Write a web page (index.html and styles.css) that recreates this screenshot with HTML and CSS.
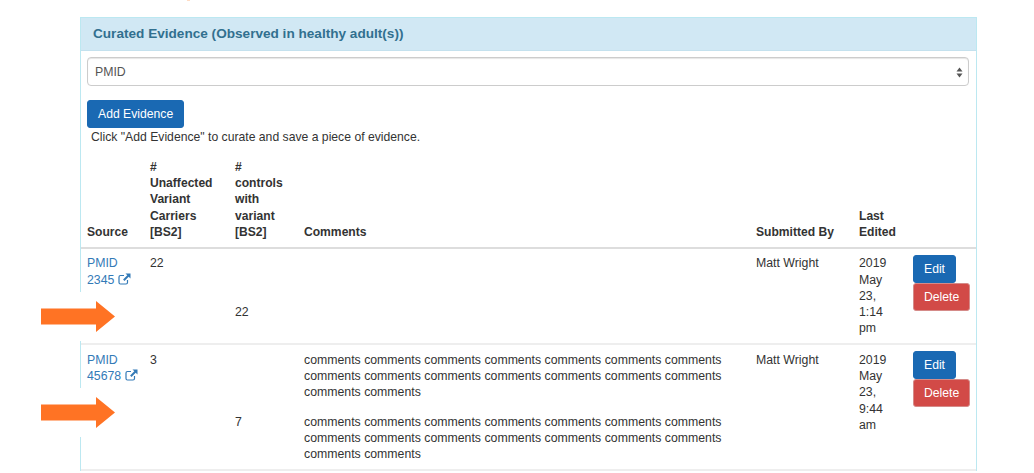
FILE: index.html
```html
<!DOCTYPE html>
<html lang="en">

<head>
    <meta charset="UTF-8">
    <title>Curated Evidence</title>
    <link rel="stylesheet" href="styles.css">
</head>

<body>
    <div class="sliver"></div>
    <div class="panel">
        <div class="panel-heading">Curated Evidence (Observed in healthy adult(s))</div>
        <div class="panel-body">
            <div class="select-box">
                <span>PMID</span>
                <svg class="select-arrows" width="7" height="11" viewBox="0 0 7 11">
                    <path d="M3.5 0.5 L6.5 4.5 H0.5 Z M3.5 10.5 L6.5 6.5 H0.5 Z" fill="#555" />
                </svg>
            </div>
            <button class="btn btn-primary add-btn">Add Evidence</button>
            <p class="help-text">Click "Add Evidence" to curate and save a piece of evidence.</p>
        </div>

        <table class="evidence">
            <colgroup>
                <col class="col-source">
                <col class="col-unaffected">
                <col class="col-controls">
                <col class="col-comments">
                <col class="col-submitted">
                <col class="col-edited">
                <col class="col-actions">
            </colgroup>
            <thead>
                <tr>
                    <th>Source</th>
                    <th>#<br>Unaffected<br>Variant<br>Carriers<br>[BS2]</th>
                    <th>#<br>controls<br>with<br>variant<br>[BS2]</th>
                    <th>Comments</th>
                    <th>Submitted By</th>
                    <th>Last Edited</th>
                    <th></th>
                </tr>
            </thead>
            <tbody>
                <tr class="sub-top">
                    <td><a href="#">PMID 2345
                            <svg class="ext-icon" width="13" height="12" viewBox="0 0 13 12">
                                <path d="M9.5 7v2.5a1.5 1.5 0 0 1-1.5 1.5H2.500a1.500 1.500 0 0 1-1.500-1.500V4A1.500 1.500 0 0 1 2.500 2.500H6" fill="none" stroke="#337ab7" stroke-width="1.200" />
                                <path d="M7.500 0.500H12.500V5.500L10.700 3.700 6.500 7.900 5.100 6.500 9.300 2.300Z" fill="#337ab7" />
                            </svg></a></td>
                    <td>22</td>
                    <td></td>
                    <td></td>
                    <td rowspan="2" class="spanning">Matt Wright</td>
                    <td rowspan="2" class="spanning">2019<br>May<br>23,<br>1:14<br>pm</td>
                    <td rowspan="2" class="spanning actions">
                        <button class="btn btn-primary">Edit</button>
                        <button class="btn btn-danger">Delete</button>
                    </td>
                </tr>
                <tr class="sub-bottom tall">
                    <td></td>
                    <td></td>
                    <td>22</td>
                    <td></td>
                </tr>
                <tr class="sub-top">
                    <td><a href="#">PMID 45678
                            <svg class="ext-icon" width="13" height="12" viewBox="0 0 13 12">
                                <path d="M9.5 7v2.5a1.5 1.5 0 0 1-1.5 1.5H2.500a1.500 1.500 0 0 1-1.500-1.500V4A1.500 1.500 0 0 1 2.500 2.500H6" fill="none" stroke="#337ab7" stroke-width="1.200" />
                                <path d="M7.500 0.500H12.500V5.500L10.700 3.700 6.500 7.900 5.100 6.500 9.300 2.300Z" fill="#337ab7" />
                            </svg></a></td>
                    <td>3</td>
                    <td></td>
                    <td>comments comments comments comments comments comments comments comments comments comments comments comments comments comments comments comments</td>
                    <td rowspan="2" class="spanning">Matt Wright</td>
                    <td rowspan="2" class="spanning">2019<br>May<br>23,<br>9:44<br>am</td>
                    <td rowspan="2" class="spanning actions">
                        <button class="btn btn-primary">Edit</button>
                        <button class="btn btn-danger">Delete</button>
                    </td>
                </tr>
                <tr class="sub-bottom">
                    <td></td>
                    <td></td>
                    <td>7</td>
                    <td>comments comments comments comments comments comments comments comments comments comments comments comments comments comments comments comments</td>
                </tr>
            </tbody>
        </table>
    </div>

    <!-- arrows sit on top of the screenshot, each with its own white backing -->
    <div class="arrow arrow-one">
        <svg width="74" height="31" viewBox="0 0 74 31">
            <path d="M0 7.500H55V0L74 15.500 55 31V23.500H0Z" fill="#ff7324" />
        </svg>
    </div>
    <div class="arrow arrow-two">
        <svg width="74" height="31" viewBox="0 0 74 31">
            <path d="M0 7.500H55V0L74 15.500 55 31V23.500H0Z" fill="#ff7324" />
        </svg>
    </div>
</body>

</html>
```

FILE: styles.css
```css
* {
    box-sizing: border-box;
}

html,
body {
    height: 473px;
    overflow: hidden;
}

body {
    margin: 0;
    padding: 17px 57px 0 80px;
    background-color: #fff;
    font-family: 'Liberation Sans', Arial, sans-serif;
    font-size: 12.3px;
    line-height: 16.3px;
    color: #333;
}

.panel {
    border: 1px solid #bce8f1;
    border-bottom: none;
    background-color: #fff;
}

.panel-heading {
    height: 33px;
    padding-left: 12px;
    background-color: #d1e8f4;
    border-bottom: 1px solid #c4e1ee;
    color: #31708f;
    font-size: 13.6px;
    font-weight: bold;
    line-height: 32px;
}

.panel-body {
    padding: 6px 7px 0 6px;
}

.select-box {
    display: flex;
    justify-content: space-between;
    align-items: center;
    height: 29px;
    padding: 1px 5px 0 7px;
    border: 1px solid #ccc;
    border-radius: 4px;
    box-shadow: inset 0 1px 1px rgba(0, 0, 0, 0.1);
    color: #555;
}

.btn {
    display: block;
    height: 28px;
    padding: 0 10px;
    border: 1px solid transparent;
    border-radius: 3px;
    color: #fff;
    font-family: inherit;
    font-size: 12.2px;
}

.btn-primary {
    background-color: #1a69b3;
    border-color: #1a69b3;
}

.btn-danger {
    background-color: #d24a47;
    border-color: #d58b89;
}

.add-btn {
    margin-top: 14px;
}

.help-text {
    margin: 0;
    padding: 1px 0 0 4px;
    font-size: 12.2px;
}

.evidence {
    width: 100%;
    margin-top: 7px;
    border-collapse: collapse;
    table-layout: fixed;
}

.col-source {
    width: 63px;
}

.col-unaffected {
    width: 85px;
}

.col-controls {
    width: 69px;
}

.col-comments {
    width: 452px;
}

.col-submitted {
    width: 103px;
}

.col-edited {
    width: 54px;
}

.col-actions {
    width: 69px;
}

.evidence th {
    padding: 6.5px 6px;
    border-bottom: 2px solid #ddd;
    text-align: left;
    vertical-align: bottom;
    font-size: 12.1px;
    font-weight: bold;
}

.evidence td {
    padding: 6.5px 6px;
    vertical-align: top;
}

.evidence a {
    color: #337ab7;
    text-decoration: none;
}

.ext-icon {
    vertical-align: -1px;
}

.sub-top {
    border-top: 2px solid #eee;
}

.sub-top td {
    padding-bottom: 7px;
}

.sub-top td.spanning {
    padding-bottom: 0;
}

.sub-bottom td {
    padding-top: 6px;
    padding-bottom: 7px;
}

.sub-bottom.tall td {
    padding-top: 9px;
    padding-bottom: 23px;
}

.sub-bottom:last-child {
    border-bottom: 2px solid #eee;
}

.evidence td.actions {
    padding-top: 6px;
}

.arrow {
    position: absolute;
    left: 41px;
    display: flex;
    align-items: center;
    width: 78px;
    height: 49px;
    background-color: #fff;
}

.arrow-one {
    top: 292px;
}

.arrow-two {
    top: 388px;
}

.arrow svg {
    display: block;
}

.sliver {
    position: absolute;
    top: 0;
    left: 187px;
    width: 3px;
    height: 1px;
    background-color: #ffdcc4;
}
```
